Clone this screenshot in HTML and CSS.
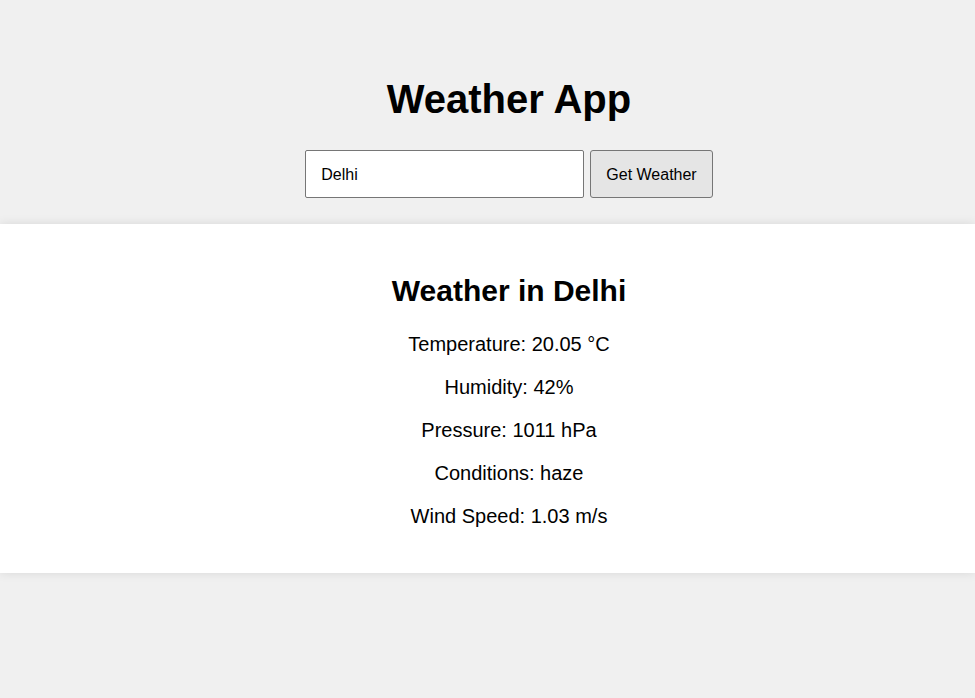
FILE: index.html
```html
<!DOCTYPE html>
<html lang="en">
<head>
<meta charset="utf-8">
<title>Weather App</title>
<link rel="stylesheet" href="styles.css">
</head>
<body>
  <header class="top">
    <h1 class="title">Weather App</h1>
    <form class="search" onsubmit="return false;">
      <input class="city" type="text" value="Delhi">
      <button class="go" type="submit">Get Weather</button>
    </form>
  </header>
  <section class="card">
    <h2 class="card-title">Weather in Delhi</h2>
    <p class="item">Temperature: 20.05 °C</p>
    <p class="item">Humidity: 42%</p>
    <p class="item">Pressure: 1011 hPa</p>
    <p class="item">Conditions: haze</p>
    <p class="item">Wind Speed: 1.03 m/s</p>
  </section>
</body>
</html>
```
FILE: styles.css
```css
* { box-sizing: border-box; }
html, body {
  margin: 0;
  padding: 0;
}
body {
  background: #f0f0f0;
  font-family: "Liberation Sans", Arial, sans-serif;
  color: #000;
  text-align: center;
  min-height: 698px;
}
.top {
  padding: 76px 0 26px 43px;
}
.title {
  margin: 0 0 28px;
  font-size: 40px;
  line-height: 46px;
  font-weight: bold;
}
.search {
  display: flex;
  justify-content: center;
  gap: 6px;
  margin: 0;
}
.city {
  width: 279px;
  height: 48px;
  padding: 2px 15px 0 15px;
  border: 1px solid #767676;
  border-radius: 2px;
  background: #fff;
  font-family: "Liberation Sans", Arial, sans-serif;
  font-size: 16px;
  color: #000;
  outline: none;
}
.go {
  height: 48px;
  padding: 2px 15px 0 15px;
  border: 1px solid #767676;
  border-radius: 3px;
  background: #e5e5e5;
  font-family: "Liberation Sans", Arial, sans-serif;
  font-size: 16px;
  color: #000;
}
.card {
  background: #fff;
  padding: 25px 0 25px 43px;
  box-shadow: 0 0 10px rgba(0, 0, 0, 0.1);
}
.card-title {
  margin: 25px 0;
  font-size: 30px;
  line-height: 34px;
  font-weight: bold;
}
.item {
  margin: 20px 0;
  font-size: 20px;
  line-height: 23px;
}
```
